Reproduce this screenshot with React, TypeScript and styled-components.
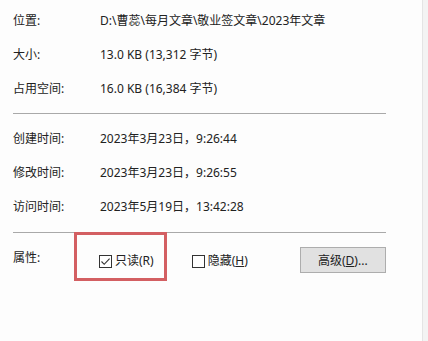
import styled, { createGlobalStyle } from 'styled-components';

const GlobalStyle = createGlobalStyle`
    html, body {
        margin: 0;
        padding: 0;
        background: #fff;
    }
    body {
        font-family: "Noto Sans", "Noto Sans CJK SC", sans-serif;
        font-size: 12px;
        color: #222;
    }
`;

const general = [
	{label: '位置:', value: 'D:\\曹蕊\\每月文章\\敬业签文章\\2023年文章'},
	{label: '大小:', value: '13.0 KB (13,312 字节)'},
	{label: '占用空间:', value: '16.0 KB (16,384 字节)'},
];

const times = [
	{label: '创建时间:', value: '2023年3月23日，9:26:44'},
	{label: '修改时间:', value: '2023年3月23日，9:26:55'},
	{label: '访问时间:', value: '2023年5月19日，13:42:28'},
];

function CheckBox({checked, children}: {checked?: boolean, children: React.ReactNode}) {
	return (
		<CheckLabel>
			<Box>
				{checked && (
					<svg width="11" height="11" viewBox="0 0 11 11">
						<path d="M1.5 5.5 L4.2 8.3 L9.6 2.6" fill="none" stroke="#333" strokeWidth="1.1" />
					</svg>
				)}
			</Box>
			<span>{children}</span>
		</CheckLabel>
	);
}

export default function App() {
	return (
		<>
			<GlobalStyle />
			<Page>
				<Main>
					<Section>
						{general.map(r => (
							<Row key={r.label}>
								<Label>{r.label}</Label>
								<Value>{r.value}</Value>
							</Row>
						))}
					</Section>
					<Separator />
					<Section $top={7}>
						{times.map(r => (
							<Row key={r.label}>
								<Label>{r.label}</Label>
								<Value>{r.value}</Value>
							</Row>
						))}
					</Section>
					<Separator $top={9} />
					<AttrRow>
						<AttrLabel>属性:</AttrLabel>
						<Highlight>
							<CheckBox checked>只读(R)</CheckBox>
						</Highlight>
						<Plain>
							<CheckBox>隐藏(<u>H</u>)</CheckBox>
						</Plain>
						<Button>高级(<u>D</u>)...</Button>
					</AttrRow>
				</Main>
				<Strip />
			</Page>
		</>
	);
}

const Page = styled.div`
    display: flex;
    height: 341px;
    background: #fdfdfd;
`;

const Main = styled.div`
    flex: 1;
    padding: 3px 36px 0 13px;
`;

const Strip = styled.div`
    width: 8px;
    background: #f3f3f3;
    border-left: 1px solid #e4e4e4;
`;

const Section = styled.div<{$top?: number}>`
    margin-top: ${p => p.$top ?? 0}px;
`;

const Row = styled.div`
    display: flex;
    align-items: center;
    height: 34px;
`;

const Label = styled.div`
    width: 87px;
    flex-shrink: 0;
`;

const Value = styled.div`
    white-space: nowrap;
`;

const Separator = styled.div<{$top?: number}>`
    height: 1px;
    background: #a9a9a9;
    margin-top: ${p => p.$top ?? 8}px;
`;

const AttrRow = styled.div`
    display: flex;
    align-items: flex-start;
`;

const AttrLabel = styled.div`
    width: 61px;
    margin-top: 17px;
    line-height: 16px;
`;

//red annotation frame around the read-only box
const Highlight = styled.div`
    margin-top: -1px;
    border: 3px solid #d35f62;
    padding: 18px 10px 9px 22px;
`;

const Plain = styled.div`
    margin: 20px 0 0 25px;
`;

const CheckLabel = styled.label`
    display: flex;
    align-items: center;
    gap: 3px;
    line-height: 16px;
    white-space: nowrap;
`;

const Box = styled.span`
    width: 11px;
    height: 11px;
    border: 1px solid #333;
    background: #fff;
    display: flex;
`;

const Button = styled.div`
    margin: 14px 0 0 52px;
    width: 84px;
    height: 24px;
    background: #e1e1e1;
    border: 1px solid #adadad;
    display: flex;
    align-items: center;
    justify-content: center;
    flex-shrink: 0;
`;
